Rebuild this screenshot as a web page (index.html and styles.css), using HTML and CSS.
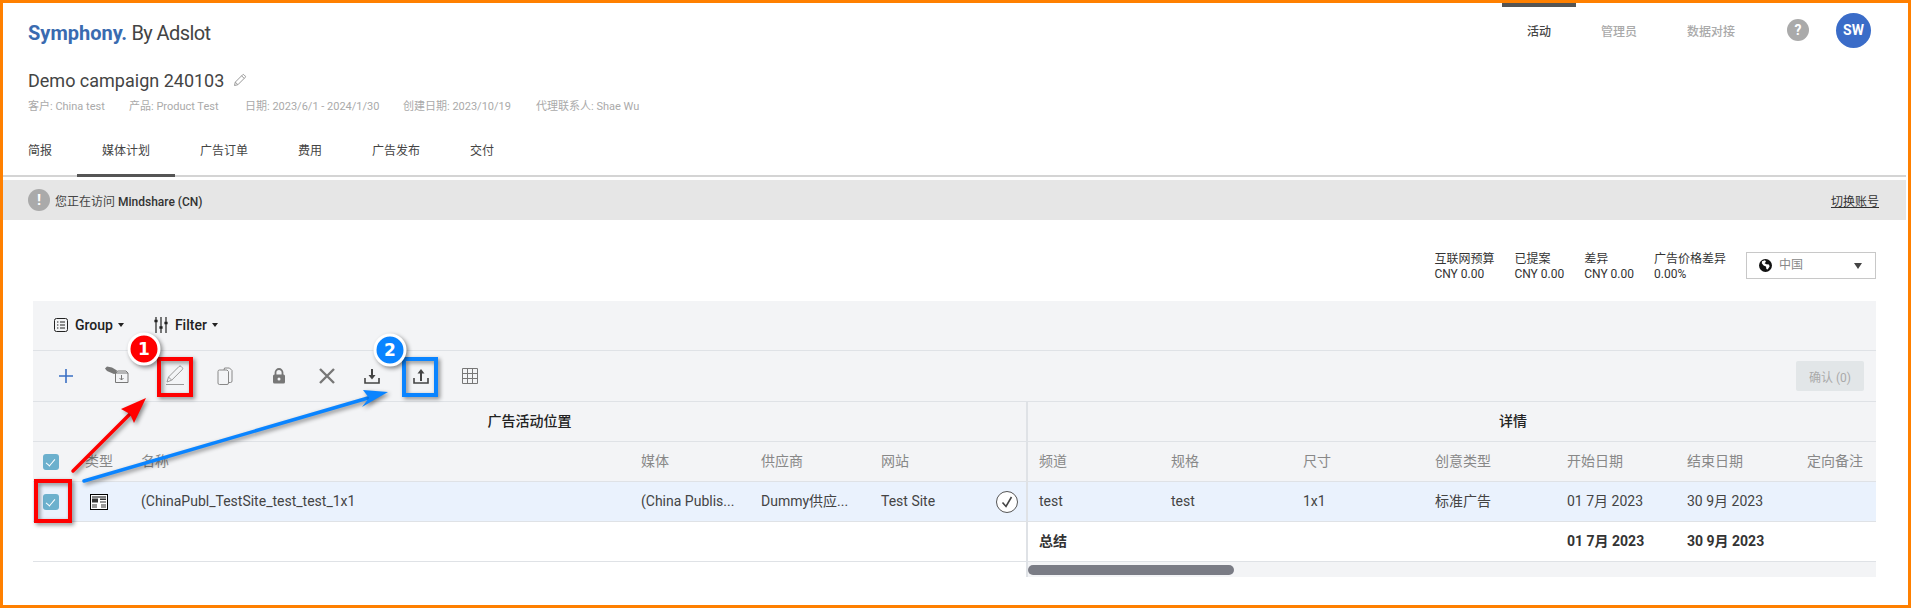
FILE: index.html
```html
<!DOCTYPE html>
<html lang="zh-CN">
  <head>
    <meta charset="UTF-8" />
    <meta name="viewport" content="width=device-width, initial-scale=1.0" />
    <title>Symphony</title>
    <link rel="stylesheet" href="styles.css">
  </head>
  <body>
    <div class="frame">
      <header class="topbar">
        <div class="logo"><b>Symphony.</b> By Adslot</div>
        <nav class="mainnav">
          <a class="active">活动</a>
          <a>管理员</a>
          <a>数据对接</a>
        </nav>
        <span class="help">?</span>
        <span class="avatar">SW</span>
      </header>

      <section class="campaign">
        <h1>Demo campaign 240103
          <svg width="14" height="14" viewBox="0 0 14 14" fill="none" stroke="#999" stroke-width="1"><path d="M1.500 12.500l.8-3.400L9.600 1.800a1 1 0 0 1 1.400 0l1.200 1.200a1 1 0 0 1 0 1.400L4.900 11.700z M2.300 9.100l2.600 2.600 M8.600 2.800l2.600 2.600"/></svg>
        </h1>
        <div class="meta">
          <span class="m1">客户: China test</span>
          <span class="m2">产品: Product Test</span>
          <span class="m3">日期: 2023/6/1 - 2024/1/30</span>
          <span class="m4">创建日期: 2023/10/19</span>
          <span>代理联系人: Shae Wu</span>
        </div>
      </section>

      <nav class="tabs">
        <a>简报</a>
        <a class="active">媒体计划</a>
        <a>广告订单</a>
        <a>费用</a>
        <a>广告发布</a>
        <a>交付</a>
      </nav>

      <div class="banner">
        <span class="bang">!</span>
        <span class="visiting">您正在访问 <b>Mindshare (CN)</b></span>
        <a class="switch">切换账号</a>
      </div>

      <main class="content">
        <div class="summary">
          <div><div>互联网预算</div><div>CNY 0.00</div></div>
          <div><div>已提案</div><div>CNY 0.00</div></div>
          <div><div>差异</div><div>CNY 0.00</div></div>
          <div><div>广告价格差异</div><div>0.00%</div></div>
          <div class="select">
            <svg width="13" height="13" viewBox="0 0 13 13"><circle cx="6.500" cy="6.500" r="6.500" fill="#111"/><path d="M3 2.200l3-1 1 1.600-1.400 1.400 1.800 1 2.600.2.600 2-2 3-1.200-.4-.4-2.400-2.400-1-1.800-2.400z" fill="#fff"/></svg>
            <span>中国</span>
            <i class="caret"></i>
          </div>
        </div>

        <div class="filters">
          <a>
            <svg width="14" height="14" viewBox="0 0 14 14" fill="none" stroke="#222" stroke-width="1"><rect x=".5" y=".5" width="13" height="13" rx="2"/><path d="M3 4h1.400M6 4h5M3 7h1.400M6 7h5M3 10h1.400M6 10h5"/></svg>
            Group <i class="caret small"></i>
          </a>
          <a>
            <svg width="14" height="16" viewBox="0 0 14 16" fill="none" stroke="#222" stroke-width="1.200"><path d="M2 0v16M7 0v16M12 0v16"/><path d="M.4 4h3.200M5.400 10.500h3.200M10.400 6h3.200" stroke-width="2.400"/></svg>
            Filter <i class="caret small"></i>
          </a>
        </div>

        <div class="tools">
          <svg width="24" height="24" viewBox="0 0 24 24" fill="none" stroke="#3a6fc4" stroke-width="1.600"><path d="M12 5v14M5 12h14"/></svg>
          <svg width="24" height="24" viewBox="0 0 24 24" fill="none" stroke="#777" stroke-width="1"><path d="M0 4.500l2-2 5 1 5 3-1 3-2 .5-7-3z" fill="#777" stroke="none"/><path d="M10.500 9h12.500v9.500H10.500z M11 9l1.500-2h8.500l2 2 M16.500 11v5 M14.500 14l2 2 2-2"/></svg>
          <svg width="24" height="24" viewBox="0 0 24 24" fill="none" stroke="#999" stroke-width="1"><path d="M4 18l1.500-5L16 2.500a1.500 1.500 0 0 1 2.200 0l1 1a1.500 1.500 0 0 1 0 2.200L8.700 16.200z M5.500 13l3.200 3.200 M3 20.500h18"/></svg>
          <svg width="24" height="24" viewBox="0 0 24 24" fill="none" stroke="#888" stroke-width="1"><path d="M5 7.500a1.500 1.500 0 0 1 1.500-1.500H14l1.500 1.500V19a1.500 1.500 0 0 1-1.500 1.500H6.500A1.500 1.500 0 0 1 5 19z M11 6l.5-2h5L19 6.500V17a1.500 1.500 0 0 1-1.500 1.500h-2"/></svg>
          <svg width="24" height="24" viewBox="0 0 24 24"><path d="M8.500 11V8.500a3.500 3.500 0 0 1 7 0V11" fill="none" stroke="#777" stroke-width="1.800"/><rect x="6" y="10.500" width="12" height="9" rx="1.500" fill="#777"/><circle cx="12" cy="15" r="1.500" fill="#f3f4f6"/></svg>
          <svg width="24" height="24" viewBox="0 0 24 24" fill="none" stroke="#777" stroke-width="2.400"><path d="M5 5l14 14M19 5L5 19"/></svg>
          <svg width="24" height="24" viewBox="0 0 24 24" fill="none" stroke="#444" stroke-width="1.600"><path d="M5 14v5h14v-5"/><path d="M12 5v8" stroke-width="2"/><path d="M8.500 11h7L12 15.500z" fill="#444" stroke="none"/></svg>
          <svg width="24" height="24" viewBox="0 0 24 24" fill="none" stroke="#444" stroke-width="1.600"><path d="M5 14v5h14v-5"/><path d="M12 9v8" stroke-width="2"/><path d="M8.500 9.500h7L12 5z" fill="#444" stroke="none"/></svg>
          <svg width="24" height="24" viewBox="0 0 24 24" fill="none" stroke="#777" stroke-width="1"><path d="M4.500 4.500h15v15h-15z M4.500 9.500h15 M4.500 14.500h15 M9.500 4.500v15 M14.500 4.500v15"/></svg>
          <button class="confirm">确认 (0)</button>
        </div>

        <div class="grid">
          <div class="pane pane-left">
            <div class="row grouphead">广告活动位置</div>
            <div class="row head cols-left">
              <span><i class="check"></i></span>
              <span>类型</span>
              <span>名称</span>
              <span>媒体</span>
              <span>供应商</span>
              <span>网站</span>
              <span></span>
            </div>
            <div class="row selected cols-left">
              <span><i class="check"></i></span>
              <span>
                <svg class="typeicon" width="18" height="16" viewBox="0 0 18 16"><rect x=".5" y=".5" width="17" height="15" fill="#fff" stroke="#000"/><path d="M2 2.500h14v1H2z" fill="#000"/><path d="M2 4.500h6v4H2zM10 4.500h6v1.500h-6zM10 7.500h6v1h-6z" fill="#333"/><path d="M2 10h5v4H2zM11 10h5v4h-5z" fill="#999"/></svg>
              </span>
              <span>(ChinaPubl_TestSite_test_test_1x1</span>
              <span>(China Publis...</span>
              <span>Dummy供应...</span>
              <span>Test Site</span>
              <span class="status">
                <svg width="22" height="22" viewBox="0 0 22 22" fill="#fff" stroke="#555"><circle cx="11" cy="11" r="10.500"/><path d="M6.500 11.500l3.500 4L15.500 6" fill="none" stroke="#444" stroke-width="1.600"/></svg>
              </span>
            </div>
            <div class="row"></div>
          </div>

          <div class="pane pane-right">
            <div class="row grouphead detail">详情</div>
            <div class="row head cols-right">
              <span>频道</span>
              <span>规格</span>
              <span>尺寸</span>
              <span>创意类型</span>
              <span>开始日期</span>
              <span>结束日期</span>
              <span>定向备注</span>
            </div>
            <div class="row selected cols-right">
              <span>test</span>
              <span>test</span>
              <span>1x1</span>
              <span>标准广告</span>
              <span>01 7月 2023</span>
              <span>30 9月 2023</span>
              <span></span>
            </div>
            <div class="row total cols-right">
              <span>总结</span>
              <span></span>
              <span></span>
              <span></span>
              <span>01 7月 2023</span>
              <span>30 9月 2023</span>
              <span></span>
            </div>
            <div class="track"><div class="thumb"></div></div>
          </div>
        </div>
      </main>
    </div>

    <!-- callouts drawn over the screenshot -->
    <svg class="callouts" width="1911" height="608" viewBox="0 0 1911 608">
      <g fill="none" stroke="#f00" stroke-width="4">
        <rect x="159" y="359" width="32" height="36"/>
        <rect x="36" y="481" width="34" height="40"/>
        <path d="M73 471L130 414" stroke-linecap="round" stroke-width="3.500"/>
      </g>
      <polygon points="146,398 121,409 130,414 134,423" fill="#f00"/>
      <g fill="none" stroke="#0a84ff" stroke-width="4">
        <rect x="404" y="359" width="32" height="36"/>
        <path d="M84 481L368 398" stroke-linecap="round" stroke-width="3.500"/>
      </g>
      <polygon points="388,392 363,390 369,398 362,407" fill="#0a84ff"/>
      <circle cx="144" cy="349" r="15" fill="#f00" stroke="#fff" stroke-width="3"/>
      <text x="144" y="355" class="num">1</text>
      <circle cx="390" cy="350" r="15" fill="#0a84ff" stroke="#fff" stroke-width="3"/>
      <text x="390" y="356" class="num">2</text>
    </svg>
  </body>
</html>
```

FILE: styles.css
```css
* {
  box-sizing: border-box;
}

body {
  margin: 0;
  position: relative;
  font-family: Roboto, "Noto Sans CJK SC", sans-serif;
  font-size: 12px;
  color: #444;
  background: #fff;
}

.frame {
  width: 1911px;
  height: 608px;
  border: 3px solid #ff8000;
  padding-right: 2px;
  overflow: hidden;
}

.topbar {
  display: flex;
  align-items: center;
  height: 54px;
  padding-left: 25px;
}

.logo {
  flex: 1;
  margin-top: 5px;
  font-size: 20px;
  letter-spacing: -0.6px;
  color: #444;
}
.logo b {
  letter-spacing: 0;
  color: #3a6bb0;
}

.mainnav {
  display: flex;
  align-self: stretch;
}
.mainnav a {
  display: flex;
  align-items: center;
  padding: 0 25px 4px;
  border-top: 4px solid transparent;
  font-weight: 500;
  color: #aaa;
}
.mainnav a.active {
  border-top-color: #555;
  color: #444;
}

.help {
  width: 22px;
  height: 22px;
  margin-left: 27px;
  border-radius: 50%;
  background: #aaa;
  color: #fff;
  font-size: 14px;
  font-weight: 700;
  line-height: 22px;
  text-align: center;
}

.avatar {
  width: 35px;
  height: 35px;
  margin-left: 27px;
  margin-right: 35px;
  border-radius: 50%;
  background: #3a6cc8;
  color: #fff;
  font-size: 14px;
  font-weight: 700;
  line-height: 35px;
  text-align: center;
}

.campaign {
  padding: 11px 0 0 25px;
  height: 68px;
}
.campaign h1 {
  margin: 0;
  font-size: 18px;
  font-weight: 400;
  line-height: 26px;
}
.campaign h1 svg {
  margin-left: 4px;
}

.meta {
  display: flex;
  margin-top: 5px;
  font-size: 11px;
  line-height: 16px;
  color: #aaa;
}
.meta .m1 {
  width: 101px;
}
.meta .m2 {
  width: 116px;
}
.meta .m3 {
  width: 158px;
}
.meta .m4 {
  width: 133px;
}

.tabs {
  display: flex;
  height: 52px;
  border-bottom: 2px solid #d4d4d4;
}
.tabs a {
  height: 52px;
  padding: 17px 25px 0;
  line-height: 18px;
  border-bottom: 3px solid transparent;
}
.tabs a.active {
  border-bottom-color: #555;
}

.banner {
  display: flex;
  align-items: center;
  height: 40px;
  margin-top: 3px;
  padding: 0 27px 0 25px;
  background: #e6e6e6;
}
.bang {
  width: 22px;
  height: 22px;
  border-radius: 50%;
  background: #aaa;
  color: #fff;
  font-size: 15px;
  font-weight: 700;
  line-height: 22px;
  text-align: center;
}
.visiting {
  flex: 1;
  margin-left: 5px;
}
.visiting b {
  font-weight: 500;
  color: #333;
}
.switch {
  text-decoration: underline;
  color: #333;
}

.content {
  padding: 32px 30px 0;
}

.summary {
  display: flex;
  justify-content: flex-end;
  gap: 20px;
  height: 27px;
  margin-bottom: 22px;
  line-height: 15px;
  color: #333;
}

.select {
  display: flex;
  align-items: center;
  width: 130px;
  height: 27px;
  padding: 0 13px 0 12px;
  border: 1px solid #c8c8c8;
  color: #888;
}
.select span {
  flex: 1;
  margin-left: 7px;
}

.caret {
  width: 0;
  height: 0;
  border: 4px solid transparent;
  border-top: 6px solid #444;
  border-bottom: 0;
}
.caret.small {
  border-width: 4px 3px 0;
  border-top-color: #222;
  margin-left: 5px;
}

.filters {
  display: flex;
  align-items: center;
  gap: 30px;
  height: 49px;
  padding: 0 0 2px 21px;
  background: #f3f4f6;
}
.filters a {
  display: flex;
  align-items: center;
  font-size: 14px;
  font-weight: 500;
  color: #222;
}
.filters svg {
  margin-right: 7px;
}

.tools {
  display: grid;
  grid-template-columns: 51px 58px 50px 54px 48px 45px 49px 49px 24px 1fr;
  align-items: center;
  height: 52px;
  padding: 0 12px 0 21px;
  background: #f3f4f6;
  border-top: 1px solid #dfe2e6;
  border-bottom: 1px solid #dfe2e6;
}

.confirm {
  justify-self: end;
  width: 68px;
  height: 30px;
  border: 0;
  border-radius: 2px;
  background: #e2e6e8;
  color: #aaa;
  font-family: inherit;
  font-size: 12px;
}

.grid {
  display: grid;
  grid-template-columns: 993px 850px;
}
.pane-right {
  border-left: 2px solid #dfe2e6;
}

.row {
  height: 40px;
  border-bottom: 1px solid #dfe2e6;
  font-size: 14px;
  line-height: 39px;
}
.grouphead {
  background: #f3f4f6;
  font-weight: 500;
  color: #222;
  text-align: center;
}
.grouphead.detail {
  padding-left: 122px;
}
.head {
  background: #f3f4f6;
  color: #888;
}
.selected {
  background: #eaf2fd;
}
.total {
  font-weight: 700;
  color: #333;
}

.cols-left {
  display: grid;
  grid-template-columns: 40px 56px 500px 120px 120px 120px 37px;
}
.cols-right {
  display: grid;
  grid-template-columns: 132px 132px 132px 132px 120px 120px 80px;
}
.cols-left > span,
.cols-right > span {
  display: flex;
  align-items: center;
  padding: 0 12px;
  white-space: nowrap;
}
.cols-right > span {
  padding: 0 11px;
}
.cols-left > span:first-child {
  padding: 0 0 0 10px;
}
.cols-left > .status {
  padding: 0 0 0 7px;
}
.typeicon {
  margin-left: 5px;
}

.check {
  position: relative;
  width: 16px;
  height: 16px;
  border-radius: 3px;
  background: #6cb0cd;
}
.check::after {
  content: "";
  position: absolute;
  left: 5px;
  top: 3px;
  width: 4px;
  height: 8px;
  border: solid #fff;
  border-width: 0 1.5px 1.5px 0;
  transform: rotate(40deg);
}

.track {
  height: 15px;
  padding-top: 3px;
  background: #f3f4f6;
}
.thumb {
  width: 206px;
  height: 10px;
  border-radius: 5px;
  background: #7a7c85;
}

.callouts {
  position: absolute;
  top: 0;
  left: 0;
}
.callouts g,
.callouts polygon,
.callouts circle {
  filter: drop-shadow(2px 2px 2px rgba(0, 0, 0, 0.45));
}
.num {
  fill: #fff;
  font-family: "DejaVu Sans", sans-serif;
  font-size: 17px;
  font-weight: 700;
  text-anchor: middle;
}
```
